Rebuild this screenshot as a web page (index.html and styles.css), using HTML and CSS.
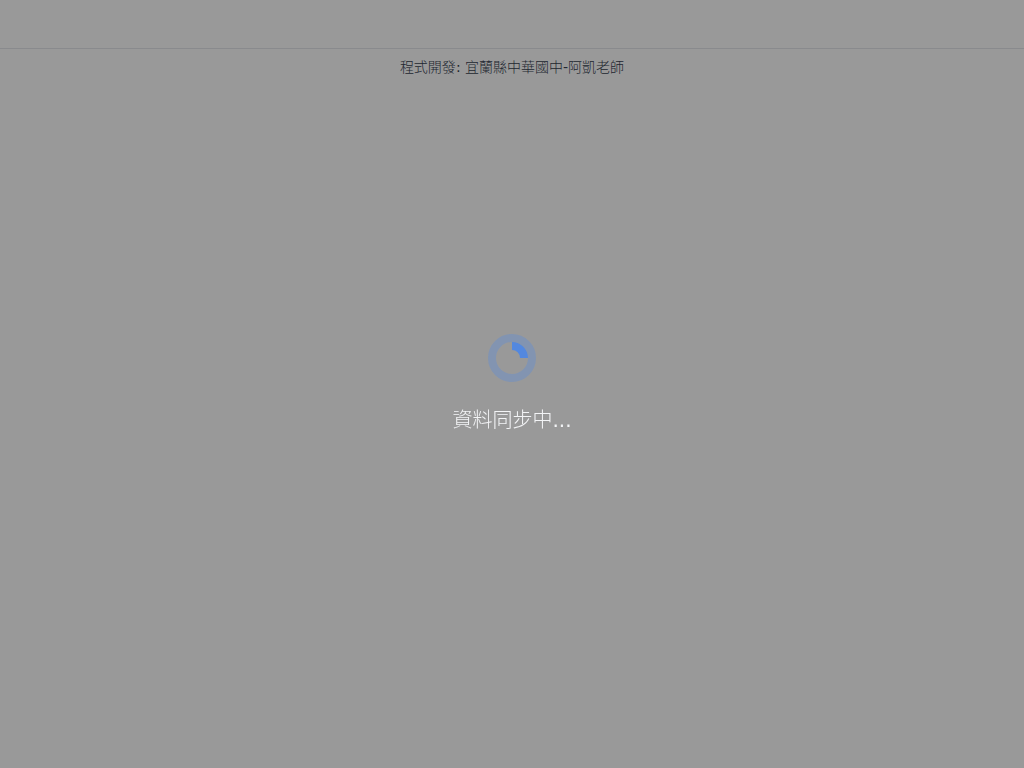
FILE: index.html
```html
<!DOCTYPE html>
<html lang="zh-TW">
<head>
<meta charset="utf-8">
<meta name="viewport" content="width=device-width, initial-scale=1">
<title>資料同步中</title>
<link rel="stylesheet" href="styles.css">
</head>
<body>
<footer class="credit">程式開發<span class="mark">:</span> 宜蘭縣中華國中<span class="mark">-</span>阿凱老師</footer>
<div class="overlay" role="status">
<svg class="spinner" viewBox="0 0 24 24" fill="none" aria-hidden="true">
<circle class="track" cx="12" cy="12" r="10" stroke="currentColor" stroke-width="4"/>
<path class="arc" fill="currentColor" d="M12 4a8 8 0 0 1 8 8h-4a4 4 0 0 0-4-4z"/>
</svg>
<p class="message">資料同步中<span class="mark">...</span></p>
</div>
</body>
</html>
```
FILE: styles.css
```css
* {
  box-sizing: border-box;
}

body {
  margin: 0;
  min-height: 100vh;
  padding-top: 48px;
  background: #fff;
  font-family: "DejaVu Sans", "Noto Sans CJK TC", sans-serif;
  font-weight: 300;
}

.mark {
  font-weight: 400;
}

.credit {
  padding: 8px 16px;
  border-top: 1px solid #e5e7eb;
  color: #374151;
  font-size: 14px;
  line-height: 20px;
  text-align: center;
}

.overlay {
  position: fixed;
  inset: 0;
  display: flex;
  flex-direction: column;
  align-items: center;
  justify-content: center;
  gap: 24px;
  background: rgba(0, 0, 0, 0.4);
}

.spinner {
  width: 48px;
  height: 48px;
  color: #3b82f6;
}

.track {
  opacity: 0.25;
}

.arc {
  opacity: 0.75;
}

.message {
  margin: 0;
  color: #f3f4f6;
  font-size: 20px;
  line-height: 28px;
}
```
